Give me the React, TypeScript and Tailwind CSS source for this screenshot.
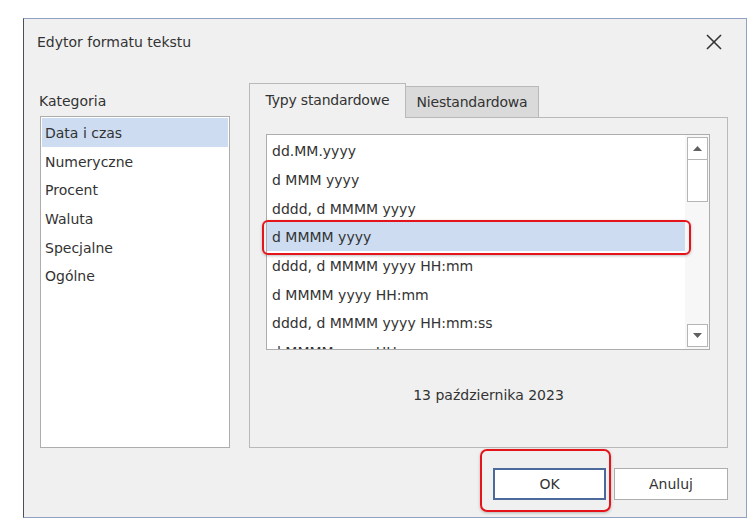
const CATEGORIES = ['Data i czas', 'Numeryczne', 'Procent', 'Waluta', 'Specjalne', 'Ogólne']

const FORMATS = [
  'dd.MM.yyyy',
  'd MMM yyyy',
  'dddd, d MMMM yyyy',
  'd MMMM yyyy',
  'dddd, d MMMM yyyy HH:mm',
  'd MMMM yyyy HH:mm',
  'dddd, d MMMM yyyy HH:mm:ss',
  'd MMMM yyyy HH:mm:ss',
]

function ScrollButton({ dir }: { dir: 'up' | 'down' }) {
  return (
    <div className="flex h-[23px] w-[21px] items-center justify-center border border-[#b5b5b5] bg-white">
      <svg width="9" height="5" viewBox="0 0 9 5">
        {dir === 'up' ? <polygon points="0,5 9,5 4.5,0" fill="#606060" /> : <polygon points="0,0 9,0 4.5,5" fill="#606060" />}
      </svg>
    </div>
  )
}

export default function App() {
  return (
    <div className="min-h-[527px] w-[756px] bg-white pt-[18px] pl-[23px] font-['DejaVu_Sans',sans-serif] text-[14px] text-[#333]">
      <div className="relative flex h-[500px] w-[724px] flex-col border border-[#8fa3c0] border-l-[#4a4f5a] bg-[#f0f0f0]">
        {/* title */}
        <div className="flex h-[46px] shrink-0 items-center justify-between pl-[13px] pr-[24px]">
          <span>Edytor formatu tekstu</span>
          <svg width="16" height="16" viewBox="0 0 16 16" stroke="#333" strokeWidth="1.6">
            <line x1="1" y1="1" x2="15" y2="15" />
            <line x1="15" y1="1" x2="1" y2="15" />
          </svg>
        </div>

        <div className="flex h-[383px] shrink-0">
          {/* categories */}
          <div className="ml-[16px] flex w-[190px] flex-col pt-[26px]">
            <div className="-ml-px h-[20px] leading-[20px]">Kategoria</div>
            <div className="mt-[5px] h-[332px] border border-[#adadad] bg-white p-[1px]">
              {CATEGORIES.map((c, i) => (
                <div
                  key={c}
                  className={`flex h-[28.7px] items-center pt-[2px] pl-[3px] ${i === 0 ? 'bg-[#cddcf1]' : ''}`}
                >
                  {c}
                </div>
              ))}
            </div>
          </div>

          {/* tabs */}
          <div className="ml-[19px] flex w-[479px] flex-col pt-[18px]">
            <div className="relative z-10 flex h-[35px] items-end">
              <div className="flex h-[35px] w-[157px] items-center justify-center border border-b-0 border-[#b9b9b9] bg-[#f0f0f0] pb-[2px] tracking-[-0.2px]">
                Typy standardowe
              </div>
              <div className="-ml-px flex h-[32px] w-[134px] items-center justify-center border border-[#b9b9b9] bg-[#dadada] tracking-[-0.2px]">
                Niestandardowa
              </div>
            </div>
            <div className="-mt-px flex h-[331px] flex-col border border-[#b9b9b9] bg-[#f0f0f0] px-[16px] pt-[16px]">
              <div className="flex h-[216px] w-[444px] border border-[#adadad] bg-white">
                <div className="flex-1 overflow-hidden pt-[1px]">
                  {FORMATS.map((f, i) => (
                    <div
                      key={f}
                      className={`flex h-[28.7px] shrink-0 items-center whitespace-nowrap pt-[3px] pl-[5px] ${i === 3 ? 'bg-[#cddcf1]' : ''}`}
                    >
                      {f}
                    </div>
                  ))}
                </div>
                <div className="flex w-[24px] flex-col items-center bg-[#f7f7f7] py-[2px]">
                  <ScrollButton dir="up" />
                  <div className="h-[42px] w-[21px] border border-t-0 border-[#b5b5b5] bg-white" />
                  <div className="flex-1" />
                  <ScrollButton dir="down" />
                </div>
              </div>
              <div className="mt-[35px] text-center">13 października 2023</div>
            </div>
          </div>
        </div>

        {/* buttons */}
        <div className="flex justify-end gap-[8px] pt-[20px] pr-[18px]">
          <button className="h-[32px] w-[113px] border-2 border-[#4b6a9b] bg-white">OK</button>
          <button className="h-[32px] w-[114px] border border-[#adadad] bg-white">Anuluj</button>
        </div>

        {/* annotation highlights */}
        <div className="pointer-events-none absolute top-[201px] left-[238px] h-[35px] w-[429px] rounded-[6px] border-2 border-[#e5141b] shadow-[0_1px_3px_rgba(0,0,0,0.25)]" />
        <div className="pointer-events-none absolute top-[430px] left-[456px] h-[63px] w-[131px] rounded-[7px] border-2 border-[#e5141b] shadow-[0_1px_3px_rgba(0,0,0,0.25)]" />
      </div>
    </div>
  )
}
